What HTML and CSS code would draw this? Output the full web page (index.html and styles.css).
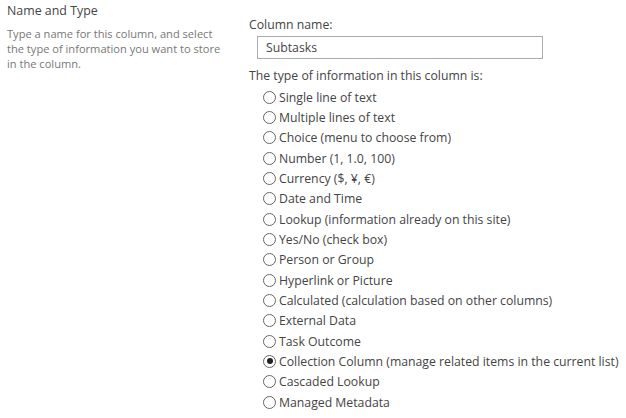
FILE: index.html
```html
<!DOCTYPE html>
<html>
<head>
<meta charset="utf-8">
<link rel="stylesheet" href="styles.css">
</head>
<body>
<div class="section">
  <div class="side">
    <h3 class="title">Name and Type</h3>
    <p class="desc">Type a name for this column, and select the type of information you want to store in the column.</p>
  </div>
  <div class="main">
    <div class="label">Column name:</div>
    <div class="field"><input class="textbox" type="text" value="Subtasks"></div>
    <div class="label type-label">The type of information in this column is:</div>
    <ul class="options">
      <li class="opt"><span class="radio"></span>Single line of text</li>
      <li class="opt"><span class="radio"></span>Multiple lines of text</li>
      <li class="opt"><span class="radio"></span>Choice (menu to choose from)</li>
      <li class="opt"><span class="radio"></span>Number (1, 1.0, 100)</li>
      <li class="opt"><span class="radio"></span>Currency ($, ¥, €)</li>
      <li class="opt"><span class="radio"></span>Date and Time</li>
      <li class="opt"><span class="radio"></span>Lookup (information already on this site)</li>
      <li class="opt"><span class="radio"></span>Yes/No (check box)</li>
      <li class="opt"><span class="radio"></span>Person or Group</li>
      <li class="opt"><span class="radio"></span>Hyperlink or Picture</li>
      <li class="opt"><span class="radio"></span>Calculated (calculation based on other columns)</li>
      <li class="opt"><span class="radio"></span>External Data</li>
      <li class="opt"><span class="radio"></span>Task Outcome</li>
      <li class="opt"><span class="radio checked"></span>Collection Column (manage related items in the current list)</li>
      <li class="opt"><span class="radio"></span>Cascaded Lookup</li>
      <li class="opt"><span class="radio"></span>Managed Metadata</li>
    </ul>
  </div>
</div>
</body>
</html>
```
FILE: styles.css
```css
html, body {
  margin: 0;
  padding: 0;
  background: #fff;
}
body {
  font-family: "Open Sans", "Noto Sans", sans-serif;
  color: #444;
  width: 626px;
  height: 418px;
  overflow: hidden;
}
.section {
  display: flex;
}
.side {
  flex: none;
  width: 242px;
  padding-left: 7px;
  box-sizing: border-box;
}
.title {
  margin: 0;
  padding-top: 2px;
  font-size: 12.4px;
  font-weight: normal;
  line-height: 18px;
  color: #444;
}
.desc {
  margin: 6px 0 0 0;
  font-size: 11.1px;
  line-height: 15px;
  color: #777;
  width: 216px;
}
.main {
  flex: none;
  padding-left: 7px;
  padding-top: 16px;
}
.label {
  font-size: 12.25px;
  line-height: 18px;
  color: #444;
}
.field {
  padding: 2px 0 0 8px;
}
.textbox {
  display: block;
  width: 286px;
  height: 23px;
  box-sizing: border-box;
  border: 1px solid #ababab;
  padding: 0 8px;
  margin: 0;
  font-family: inherit;
  font-size: 12.25px;
  color: #444;
  outline: none;
}
.type-label {
  margin-top: 8px;
}
.options {
  list-style: none;
  margin: 2px 0 0 14px;
  padding: 0;
}
.opt {
  display: flex;
  align-items: center;
  height: 20.33px;
  font-size: 12.25px;
  color: #444;
  white-space: nowrap;
}
.radio {
  width: 11px;
  height: 11px;
  border: 1px solid #666;
  border-radius: 50%;
  margin-right: 3px;
  flex: none;
  position: relative;
  box-sizing: content-box;
}
.radio.checked::after {
  content: "";
  position: absolute;
  left: 2.5px;
  top: 2.5px;
  width: 6px;
  height: 6px;
  border-radius: 50%;
  background: #222;
}
```
